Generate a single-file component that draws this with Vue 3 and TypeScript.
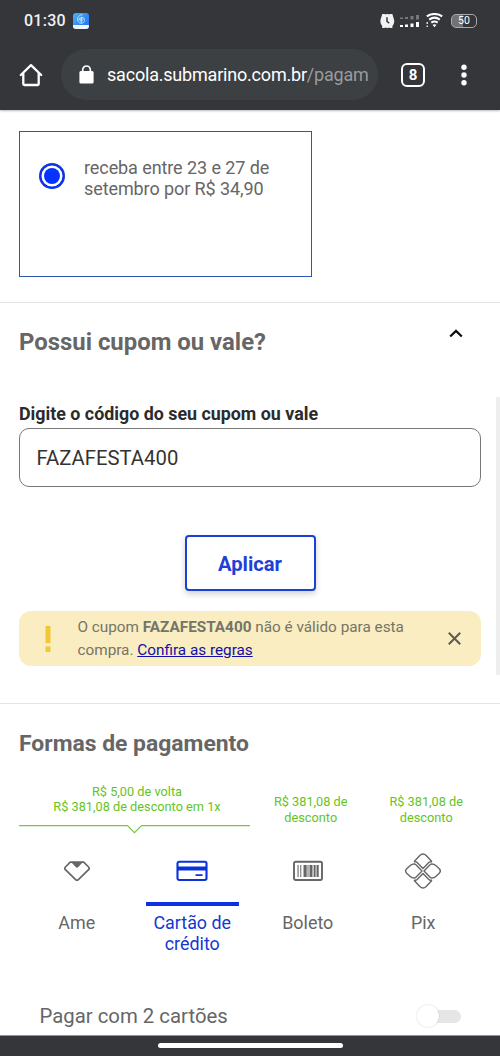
<script setup lang="ts">
import { ref } from 'vue'

interface Method {
  id: string
  label: string[]
}

const coupon = ref('FAZAFESTA400')
const selected = ref('card')
const methods: Method[] = [
  { id: 'ame', label: ['Ame'] },
  { id: 'card', label: ['Cartão de', 'crédito'] },
  { id: 'boleto', label: ['Boleto'] },
  { id: 'pix', label: ['Pix'] },
]
</script>

<template>
  <div class="screen">
    <header class="chrome">
      <div class="status">
        <span class="clock">01:30</span>
        <svg class="app-badge" width="16" height="16" viewBox="0 0 16 16">
          <defs>
            <linearGradient id="badgeFill" x1="0" y1="0" x2="1" y2="1">
              <stop offset="0" stop-color="#48b4f5" />
              <stop offset="1" stop-color="#2468f0" />
            </linearGradient>
          </defs>
          <rect width="16" height="16" rx="3" fill="url(#badgeFill)" />
          <path d="M0 12h16v1a3 3 0 0 1-3 3H3a3 3 0 0 1-3-3z" fill="#eef5fc" />
          <g fill="none" stroke="#c5e5ff" stroke-width=".9">
            <path d="M9.500 1.700C6 2 4.300 4.300 4.700 7c.4 2.700 3 4 5 3 2.200-1 2.400-4 .6-5.200C8.600 3.700 6.500 5 6.700 6.900c.2 1.500 2.200 1.900 2.800.6" />
            <path d="M8.300 4v6M5.500 6h5" />
          </g>
        </svg>
        <svg class="alarm" width="15" height="16" viewBox="0 0 15 16">
          <circle cx="7.300" cy="8" r="7" fill="#f2f2f2" />
          <path d="M1.300 4.500 2.200 1h3.200l-3 4zM13.300 4.500 12.400 1H9.200l3 4zM2.200 11v4h3.200zM12.400 11v4H9.200z" fill="#f2f2f2" />
          <path d="M7 4.300V8.500l2.200 1.700" fill="none" stroke="#35363a" stroke-width="1.500" />
        </svg>
        <svg class="signal" width="20" height="14" viewBox="0 0 20 14">
          <g fill="#77787b">
            <rect x="0" y="3.500" width="3" height="1.500" /><rect x="5" y="3" width="3" height="2" />
            <rect x="10.500" y="2" width="3" height="3.500" /><rect x="16" y="1" width="3" height="4.500" />
          </g>
          <g fill="#fff">
            <rect x="0" y="11" width="3" height="2" /><rect x="5" y="10.500" width="3" height="2.500" />
            <rect x="10.500" y="9.500" width="3" height="3.500" /><rect x="16" y="8" width="3" height="5" />
          </g>
        </svg>
        <svg class="wifi" width="17" height="15" viewBox="0 0 17 15">
          <g fill="none" stroke="#fff" stroke-width="2.100">
            <path d="M.8 3.400c4.500-3.200 10.900-3.200 15.400 0" />
            <path d="M3.200 6.600c3.200-2.300 7.400-2.300 10.600 0" />
            <path d="M5.300 9.600c2-1.400 4.400-1.400 6.400 0" />
          </g>
          <path d="M6.500 11.800q2-1.200 4 0l-2 2.500z" fill="#fff" />
          <path d="M.5 9h1.500v2H.5zM.5 12.500h1.500V14H.5z" fill="#ddd" />
        </svg>
        <div class="battery"><span>50</span></div>
      </div>
      <div class="toolbar">
        <svg class="home" width="24" height="24" viewBox="0 0 24 24">
          <path d="M1.800 12 12 2.200 22.200 12M4.300 10.500V21a1 1 0 0 0 1 1h13.400a1 1 0 0 0 1-1V10.500" fill="none" stroke="#fff" stroke-width="2.300" stroke-linejoin="round" stroke-linecap="round" />
        </svg>
        <div class="address">
          <svg width="15" height="19" viewBox="0 0 15 19">
            <rect x=".4" y="6" width="14.200" height="12.600" rx="1.500" fill="#fff" />
            <path d="M3.700 6.500V4.800a3.800 3.800 0 0 1 7.600 0v1.700" fill="none" stroke="#fff" stroke-width="1.700" />
          </svg>
          <span class="url">sacola.submarino.com.br<i>/pagam</i></span>
        </div>
        <div class="tabs">8</div>
        <svg class="more" width="6" height="22" viewBox="0 0 6 22">
          <g fill="#fff"><circle cx="3" cy="3.300" r="2.700" /><circle cx="3" cy="11" r="2.700" /><circle cx="3" cy="18.700" r="2.700" /></g>
        </svg>
      </div>
    </header>

    <section class="delivery">
      <label class="option">
        <span class="radio"><span></span></span>
        <span class="option-text">receba entre 23 e 27 de<br />setembro por R$ 34,90</span>
      </label>
    </section>

    <section class="coupon">
      <div class="coupon-head">
        <h2>Possui cupom ou vale?</h2>
        <svg width="14" height="9" viewBox="0 0 14 9"><path d="M1.200 7.500 7 1.900l5.800 5.600" fill="none" stroke="#111" stroke-width="2.300" /></svg>
      </div>
      <div class="coupon-body">
        <label class="field-label" for="code">Digite o código do seu cupom ou vale</label>
        <input id="code" v-model="coupon" class="field" type="text" />
        <button class="apply" type="button">Aplicar</button>
        <div class="alert">
          <svg class="bang" width="6" height="26" viewBox="0 0 6 26"><path d="M.5 0h5v17h-5zM.5 20.500h5V26h-5z" fill="#f1c736" /></svg>
          <p><span class="line">O cupom <b>FAZAFESTA400</b> não é válido para esta</span><span class="line">compra. <a>Confira as regras</a></span></p>
          <svg class="close" width="13" height="13" viewBox="0 0 13 13"><path d="m.8.8 11.400 11.400M12.200.8.8 12.200" stroke="#5c5a55" stroke-width="2" /></svg>
        </div>
      </div>
    </section>

    <section class="payment">
      <h2>Formas de pagamento</h2>
      <div class="offers">
        <div class="offer wide">
          <p>R$ 5,00 de volta<br />R$ 381,08 de desconto em 1x</p>
          <svg width="231" height="9" viewBox="0 0 231 9"><path d="M0 .6h108.500l7 7 7-7H231" fill="none" stroke="#75c83d" stroke-width="1.200" /></svg>
        </div>
        <p class="offer">R$ 381,08 de<br />desconto</p>
        <p class="offer">R$ 381,08 de<br />desconto</p>
      </div>
      <div class="methods">
        <button v-for="m in methods" :key="m.id" type="button" class="method" :class="{ active: selected === m.id }" @click="selected = m.id">
          <span class="icon">
            <svg v-if="m.id === 'ame'" width="26" height="20" viewBox="0 0 26 20">
              <path d="M6.300 1.200h13.400L24.600 6q1.200 1.300 0 2.700L14.100 18.800q-1.100.9-2.200 0L1.400 8.700Q.2 7.300 1.400 6z" fill="none" stroke="#666" stroke-width="1.700" stroke-linejoin="round" />
              <path d="M7 1h12l-4.700 5q-1.300 1.300-2.600 0z" fill="#666" />
            </svg>
            <svg v-else-if="m.id === 'card'" width="32" height="22" viewBox="0 0 32 22">
              <rect x="1.500" y="1.700" width="29" height="18.300" rx="1.700" fill="none" stroke="#0a32dc" stroke-width="2.100" />
              <path d="M1 6.600h30v4H1zM19.500 14.200h7V16h-7z" fill="#0a32dc" />
            </svg>
            <svg v-else-if="m.id === 'boleto'" width="30" height="22" viewBox="0 0 30 22">
              <rect x="1" y="1.700" width="28" height="18.300" rx="1.700" fill="none" stroke="#666" stroke-width="1.900" />
              <path d="M4.500 5h1.100v12H4.500zM7.300 5h1v12h-1zM10.500 5h3.200v12h-3.200zM14.500 5h1v12h-1zM16.500 5h3v12h-3zM20.600 5h2v12h-2zM23.500 5h2.200v12h-2.200z" fill="#666" />
            </svg>
            <svg v-else width="38" height="38" viewBox="0 0 38 38">
              <g fill="none" stroke="#666" stroke-width="1.400" stroke-linejoin="round">
                <path d="M10 9.700h1.500q.8 0 1.400.6L19 16.400l6.100-6.100q.6-.6 1.400-.6H28M10 9.700l5.800-6.200q3.200-3 6.400 0L28 9.700" />
                <path d="M10 28.300h1.500q.8 0 1.400-.6L19 21.600l6.100 6.100q.6.6 1.400.6H28M10 28.300l5.800 6.200q3.200 3 6.400 0l5.800-6.200" />
                <path d="m18 19-6.300-6.400q-.6-.6-1.500-.6-2.400 0-4 1.600L2.700 16.800q-2.200 2.200 0 4.400l3.500 3.200Q7.800 26 10.200 26q.9 0 1.500-.6z" />
                <path d="m20 19 6.300-6.400q.6-.6 1.500-.6 2.400 0 4 1.600l3.500 3.200q2.200 2.200 0 4.400l-3.500 3.200Q30.200 26 27.800 26q-.9 0-1.500-.6z" />
              </g>
            </svg>
          </span>
          <span class="name"><span v-for="part in m.label" :key="part" class="line">{{ part }}</span></span>
        </button>
      </div>
      <div class="split">
        <span>Pagar com 2 cartões</span>
        <span class="switch"><span class="knob"></span></span>
      </div>
    </section>

    <footer class="navbar"><span></span></footer>
  </div>
</template>

<style>
body { margin: 0; }
</style>

<style scoped>
* { box-sizing: border-box; }
.screen { width: 500px; height: 1056px; overflow: hidden; display: flex; flex-direction: column; background: #fff; color: #666; font-family: Roboto, sans-serif; }
p, h2 { margin: 0; }
svg { display: block; flex: none; }
button { font-family: inherit; padding: 0; cursor: pointer; }
.line { display: block; white-space: nowrap; }

.chrome { flex: none; height: 110px; background: #35363a; position: relative; z-index: 1; box-shadow: 0 1px 2px #bbb; }
.status { height: 41px; display: flex; align-items: center; padding: 0 23px 0 24px; }
.clock { width: 49px; font-size: 16px; font-weight: 500; letter-spacing: .25px; color: #f0f0f2; }
.alarm { margin-left: auto; }
.signal { margin-left: 5px; }
.wifi { margin-left: 6px; }
.battery { width: 26px; height: 14px; margin-left: 8px; border: 1px solid #aaa; border-radius: 5px; background: linear-gradient(90deg, #727376 45%, #35363a 45%); color: #fff; font-size: 10.500px; line-height: 12px; text-align: center; }
.toolbar { height: 67px; display: flex; align-items: center; padding-left: 19px; }
.address { width: 317px; height: 51px; margin-left: 18px; border-radius: 26px; background: #3c4043; display: flex; align-items: center; padding-left: 18px; gap: 13px; }
.url { color: #fff; font-size: 18px; letter-spacing: -.2px; white-space: nowrap; }
.url i { font-style: normal; color: #9a9b9e; }
.tabs { width: 24px; height: 24px; margin-left: 23px; border: 2.500px solid #fff; border-radius: 6px; color: #fff; font-size: 15px; font-weight: 700; line-height: 20px; text-align: center; }
.more { margin-left: 36px; }

.delivery { flex: none; height: 193px; padding: 21px 19px; border-bottom: 1px solid #e3e3e3; }
.option { display: flex; width: 293px; height: 146px; border: 1px solid #2f56b0; padding: 25px 0 0 19px; gap: 19px; font-size: 18px; letter-spacing: -.09px; line-height: 21px; }
.radio { width: 26px; height: 26px; margin-top: 6px; border-radius: 50%; box-shadow: inset 0 0 0 2.500px #0a32e6; display: grid; place-items: center; flex: none; }
.radio span { width: 16px; height: 16px; border-radius: 50%; background: #0433ff; }
.option-text { white-space: nowrap; }

h2 { font-size: 23.900px; line-height: 28px; font-weight: 700; white-space: nowrap; }
.coupon { flex: none; height: 401px; border-bottom: 1px solid #e3e3e3; }
.coupon-head { height: 93px; padding: 25px 37px 0 19px; display: flex; justify-content: space-between; }
.coupon-head svg { margin-top: 1px; }
.coupon-body { height: 278px; margin-top: 1px; padding: 6px 15px 0 19px; border-right: 4px solid #eee; display: flex; flex-direction: column; }
.field-label { font-size: 17.850px; line-height: 21px; font-weight: 700; color: #2b2b2b; white-space: nowrap; }
.field { display: block; width: 462px; height: 59px; margin: 4px 0 0; padding: 0 17px 0 16.500px; border: 1px solid #777; border-radius: 10px; background: #fff; font: 20.300px Roboto, sans-serif; color: #333; outline: none; }
.apply { align-self: center; width: 131px; height: 56px; margin: 48px 0 20px; padding-top: 1px; border: 2px solid #1d40d4; border-radius: 4px; background: #fff; box-shadow: 0 3px 6px rgba(0, 0, 0, .18); color: #1d40d8; font-size: 20.200px; font-weight: 700; }
.alert { width: 462px; height: 55px; flex: none; border-radius: 12px; background: #faedc1; display: flex; align-items: center; padding: 0 20px 0 26px; }
.alert p { margin-left: 26.500px; font-size: 15.300px; line-height: 22.500px; color: #747568; }
.alert a { color: #1210a6; text-decoration: underline; }
.close { margin-left: auto; }

.payment { flex: none; height: 331px; padding: 26px 19px 0; }
.payment h2 { font-size: 22.900px; }
.offers { height: 50px; margin-top: 26px; display: grid; grid-template-columns: 231px 115.500px 115.500px; font-size: 12.750px; line-height: 15.500px; text-align: center; color: #65c422; white-space: nowrap; }
.offers > .offer:not(.wide) { padding: 10px 0 0 6px; }
.wide p { height: 41px; padding-left: 5px; line-height: 15px; }
.methods { display: grid; grid-template-columns: repeat(4, 115.500px); height: 136px; }
.method { border: 0; background: none; display: flex; flex-direction: column; align-items: center; justify-content: flex-start; color: #666; font-size: 17.900px; line-height: 21px; }
.icon { height: 72px; width: 93px; border-bottom: 4px solid transparent; display: grid; place-items: center; padding-top: 6px; }
.name { margin-top: 6px; }
.active { color: #1438d0; }
.active .icon { border-color: #0a32e0; }
.split { display: flex; align-items: center; justify-content: space-between; padding: 0 20px 0 20.500px; height: 32px; margin-top: 30px; font-size: 20.350px; line-height: 24px; }
.switch { position: relative; width: 36px; height: 13px; border-radius: 7px; background: #e6e6e6; }
.knob { position: absolute; left: -8px; top: -5px; width: 22px; height: 22px; border-radius: 50%; background: #fff; box-shadow: 0 0 2px rgba(0, 0, 0, .2); }

.navbar { flex: none; height: 21px; border-top: 1px solid #8e9496; background: #35363a; display: flex; justify-content: center; }
.navbar span { width: 185px; height: 5px; margin-top: 7px; border-radius: 3px; background: #fff; }
</style>
